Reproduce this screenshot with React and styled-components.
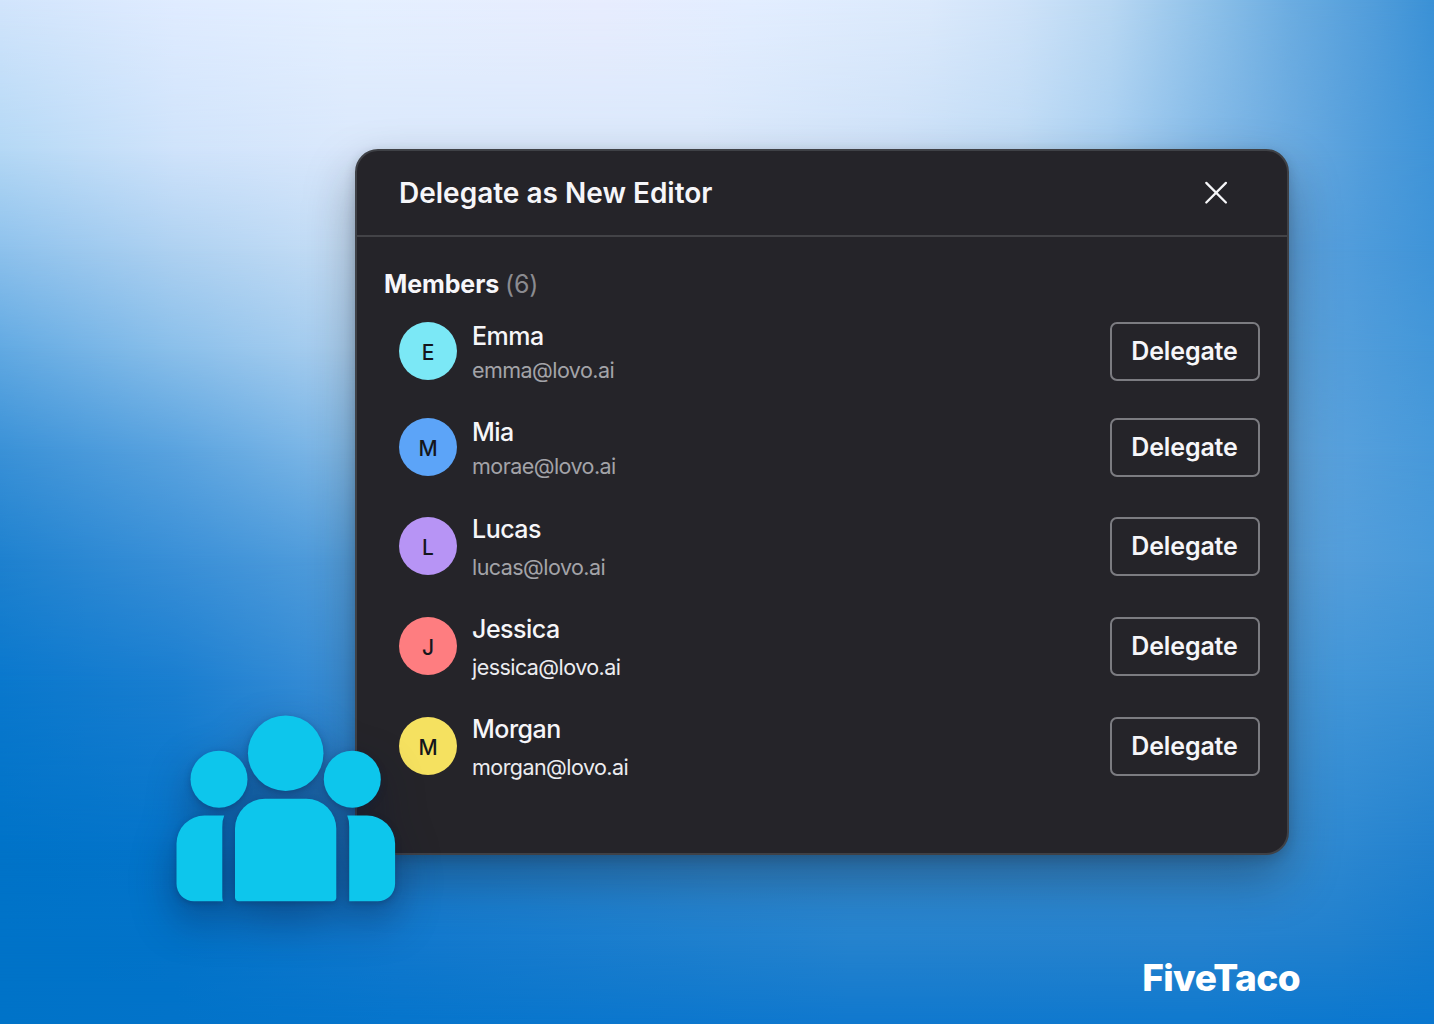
import React from 'react'
//styled
import styled, { createGlobalStyle } from 'styled-components'

const members = [
  { name: 'Emma', email: 'emma@lovo.ai', color: '#7be8f6', gap: 6, space: 37 },
  { name: 'Mia', email: 'morae@lovo.ai', color: '#5ca4f8', gap: 6, space: 40 },
  { name: 'Lucas', email: 'lucas@lovo.ai', color: '#b794f5', gap: 10, space: 41 },
  { name: 'Jessica', email: 'jessica@lovo.ai', color: '#fe7d80', gap: 10, space: 41, active: true },
  { name: 'Morgan', email: 'morgan@lovo.ai', color: '#f5e160', gap: 10, space: 0, active: true },
]

// sky rows, every row fades in from the previous one
const sky = [
  { from: -1, to: 0, stops: '#d2e5fc 0, #e0ecff 175px, #e5f0ff 350px, #e8edfe 600px, #e3eeff 750px, #dceafc 930px, #cfe3f9 1020px, #b9d8f3 1110px, #92c3ea 1200px, #6cade1 1290px, #519ddb 1375px, #3a91d6 1434px' },
  { from: 0, to: 150, stops: '#b4d8f5 0, #cfe3fb 175px, #dae8fc 350px, #dae8fb 700px, #cde1f8 900px, #bfdbf5 1020px, #a8cff1 1110px, #86bbe8 1200px, #6aaae0 1290px, #4f9cdb 1375px, #3f94d8 1434px' },
  { from: 150, to: 250, stops: '#8dc1ec 0, #aed1f1 175px, #c6def6 350px, #b4d5f2 900px, #5ba1dd 1300px, #3f94d8 1434px' },
  { from: 250, to: 350, stops: '#61a9e2 0, #8abfea 175px, #acd0f0 350px, #5fa6df 1280px, #549edb 1340px, #4397d9 1434px' },
  { from: 350, to: 450, stops: '#3a91d7 0, #5aa3df 175px, #84bbe8 350px, #63a8e0 1280px, #57a0dc 1340px, #4799da 1434px' },
  { from: 450, to: 560, stops: '#1e81cf 0, #398fd7 175px, #559fdc 350px, #5ba3dd 1280px, #549edb 1340px, #4799da 1434px' },
  { from: 560, to: 680, stops: '#0a78cd 0, #1a7ed0 175px, #3c8fd6 350px, #4a9ada 1280px, #4296d8 1340px, #3a91d5 1434px' },
  { from: 680, to: 850, stops: '#0073c8 0, #0474ca 175px, #1a7ed0 350px, #3189d0 717px, #368dd2 1280px, #2d88d1 1340px, #2281ce 1434px' },
  { from: 850, to: 940, stops: '#0073c8 0, #0273c9 175px, #1178cd 400px, #2583ce 850px, #2682ce 1200px, #2080ce 1340px, #157bcd 1434px' },
  { from: 940, to: 1024, stops: '#0073c8 0, #0273c9 175px, #0675cc 400px, #1078ce 850px, #0f79ce 1200px, #0a77cf 1434px' },
]

const CloseIcon = () => (
  <svg width="24" height="24" viewBox="0 0 24 24" fill="none" stroke="#f6f6f8" strokeWidth="2.3" strokeLinecap="round">
    <path d="M2.3 1.900 21.900 21.500M21.900 1.900 2.300 21.500" />
  </svg>
)

const App = () => {
  return (
    <Page>
      <GlobalStyle />
      <Sky>
        {sky.map((row) => (
          <SkyRow key={row.to} $stops={row.stops} $from={row.from} $to={row.to} />
        ))}
      </Sky>
      <Modal>
        <Header>
          <Title>Delegate as New Editor</Title>
          <Close aria-label="Close">
            <CloseIcon />
          </Close>
        </Header>
        <Body>
          <Heading>
            Members <Count>(6)</Count>
          </Heading>
          {members.map((member) => (
            <Row key={member.name} $space={member.space}>
              <Avatar $color={member.color}>{member.name[0]}</Avatar>
              <Info $gap={member.gap}>
                <Name>{member.name}</Name>
                <Email $active={member.active}>{member.email}</Email>
              </Info>
              <Button>Delegate</Button>
            </Row>
          ))}
        </Body>
      </Modal>
      <People viewBox="176 715 220 188" fill="#0dc6ec">
        <circle cx="285.7" cy="753.2" r="37.8" />
        <circle cx="219" cy="779.2" r="28.5" />
        <circle cx="352.3" cy="779.2" r="28.5" />
        <path d="M265 798.8h41.3a30 30 0 0 1 30 30v68.5a4 4 0 0 1-4 4H239a4 4 0 0 1-4-4v-68.5a30 30 0 0 1 30-30z" />
        <path d="M204.500 815.600H224.200Q222.300 820 222.300 827V897Q222.300 899.500 223 901.300H194a17.500 17.500 0 0 1-17.500-17.500V843.600a28 28 0 0 1 28-28z" />
        <path d="M367.200 815.600H347.200Q349.200 820 349.200 827V901.300H377.600a17.500 17.500 0 0 0 17.500-17.500V843.600a28 28 0 0 0-28-28z" />
      </People>
      <Brand>FiveTaco</Brand>
    </Page>
  )
}

export default App

const GlobalStyle = createGlobalStyle`
  *{
    box-sizing: border-box;
  }

  body{
    margin: 0;
    overflow: hidden;
    font-family: Inter, "Liberation Sans", sans-serif;
  }
`

const Page = styled.div`
  position: relative;
  width: 1434px;
  height: 1024px;
  padding: 149px 134px 0 355px;
  overflow: hidden;

  display: flex;
  flex-direction: column;
`

const Sky = styled.div`
  position: absolute;
  inset: 0;
`

const SkyRow = styled.div`
  position: absolute;
  inset: 0;
  background: linear-gradient(90deg, ${({ $stops }) => $stops});
  mask-image: linear-gradient(180deg, transparent ${({ $from }) => $from}px, #000 ${({ $to }) => $to}px);
`

const Modal = styled.section`
  position: relative;
  width: 934px;
  height: 706px;
  background: #252429;
  border: 2px solid #3f4146;
  border-radius: 23px;
  box-shadow: 0 24px 50px rgba(20, 25, 35, 0.36), 0 4px 12px rgba(20, 25, 35, 0.2);
`

const Header = styled.header`
  height: 86px;
  padding: 0 59px 0 42px;
  border-bottom: 2px solid #434347;

  display: flex;
  align-items: center;
  justify-content: space-between;
`

const Title = styled.h1`
  margin: 0;
  color: #f6f6f9;
  font-size: 28px;
  font-weight: 600;
`

const Close = styled.button`
  display: flex;
  padding: 0;
  border: 0;
  background: none;
`

const Body = styled.div`
  padding: 32px 27px 0;
`

const Heading = styled.h2`
  margin: 0 0 23px;
  color: #f6f6f9;
  font-size: 25px;
  font-weight: 650;
  line-height: 30px;
  letter-spacing: -0.1px;
`

const Count = styled.span`
  color: #8b8b90;
  font-weight: 400;
`

const Row = styled.div`
  height: 59px;
  margin-bottom: ${({ $space }) => $space}px;
  padding-left: 15px;

  display: flex;
  align-items: center;
`

const Avatar = styled.div`
  align-self: flex-start;
  width: 58px;
  height: 58px;
  padding-top: 2px;
  border-radius: 100%;
  background: ${({ $color }) => $color};
  color: #15161c;
  font-size: 21px;
  font-weight: 500;

  display: flex;
  align-items: center;
  justify-content: center;
`

const Info = styled.div`
  flex: 1;
  margin-left: 15px;
  padding-top: 3px;

  display: flex;
  flex-direction: column;
  gap: ${({ $gap }) => $gap}px;
`

const Name = styled.span`
  color: #f6f6f9;
  font-size: 25px;
  font-weight: 500;
  line-height: 28px;
  letter-spacing: -0.5px;
`

const Email = styled.span`
  color: ${({ $active }) => ($active ? '#ececf0' : '#a3a3a8')};
  font-size: 21.5px;
  line-height: 28px;
  letter-spacing: -0.55px;
`

const Button = styled.button`
  width: 150px;
  height: 59px;
  padding: 0 1px 2px 0;
  border: 2px solid #7c7c81;
  border-radius: 7px;
  background: transparent;
  color: #f6f6f9;
  font-family: inherit;
  font-size: 25px;
  font-weight: 600;
  letter-spacing: -0.15px;
`

const People = styled.svg`
  position: absolute;
  left: 176px;
  top: 715px;
  width: 220px;
  height: 188px;
  overflow: visible;
  filter: drop-shadow(0 2px 3px rgba(10, 30, 70, 0.3)) drop-shadow(0 18px 22px rgba(10, 20, 50, 0.42));
`

const Brand = styled.div`
  position: relative;
  align-self: flex-end;
  margin-top: 100px;
  color: #fff;
  font-family: Inter, sans-serif;
  font-size: 37px;
  font-weight: 800;
  line-height: 46px;
  letter-spacing: -0.6px;
`
